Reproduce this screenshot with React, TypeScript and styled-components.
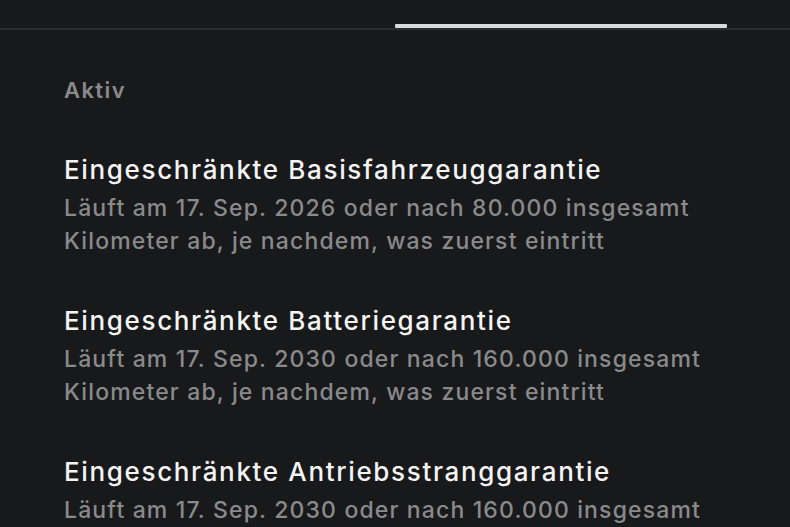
import styled, { createGlobalStyle } from "styled-components";

const GlobalStyle = createGlobalStyle`
  html, body {
    margin: 0;
    padding: 0;
    background: #18191b;
  }
  body {
    font-family: Inter, "Liberation Sans", sans-serif;
    -webkit-font-smoothing: antialiased;
  }
`;

const Page = styled.div`
  width: 790px;
  height: 527px;
  overflow: hidden;
  background: #18191b;
`;

const TabBar = styled.div`
  height: 28px;
  border-bottom: 2px solid #2c2d30;
  display: flex;
  align-items: flex-end;
  padding-left: 395px;
`;

const TabIndicator = styled.div`
  width: 332px;
  height: 4px;
  background: #d9d9d9;
  border-radius: 1px;
`;

const Content = styled.div`
  padding: 46px 64px 0;
  display: flex;
  flex-direction: column;
`;

const SectionLabel = styled.div`
  font-size: 22px;
  font-weight: 600;
  color: #8a8a8c;
  line-height: 28px;
  letter-spacing: 1.4px;
  margin-bottom: 48px;
`;

const List = styled.div`
  display: flex;
  flex-direction: column;
  gap: 45px;
`;

const Item = styled.div`
  display: flex;
  flex-direction: column;
`;

const Title = styled.div`
  font-size: 26px;
  font-weight: 500;
  color: #f4f4f4;
  line-height: 36px;
  letter-spacing: 1.65px;
  margin-bottom: 4px;
`;

const Detail = styled.div`
  font-size: 23px;
  font-weight: 500;
  color: #898a8c;
  line-height: 33px;
  letter-spacing: 1.15px;
  max-width: 680px;
`;

const warranties = [
  {
    title: "Eingeschränkte Basisfahrzeuggarantie",
    detail:
      "Läuft am 17. Sep. 2026 oder nach 80.000 insgesamt Kilometer ab, je nachdem, was zuerst eintritt",
  },
  {
    title: "Eingeschränkte Batteriegarantie",
    detail:
      "Läuft am 17. Sep. 2030 oder nach 160.000 insgesamt Kilometer ab, je nachdem, was zuerst eintritt",
  },
  {
    title: "Eingeschränkte Antriebsstranggarantie",
    detail:
      "Läuft am 17. Sep. 2030 oder nach 160.000 insgesamt Kilometer ab, je nachdem, was zuerst eintritt",
  },
];

export default function App() {
  return (
    <Page>
      <GlobalStyle />
      <TabBar>
        <TabIndicator />
      </TabBar>
      <Content>
        <SectionLabel>Aktiv</SectionLabel>
        <List>
          {warranties.map((w) => (
            <Item key={w.title}>
              <Title>{w.title}</Title>
              <Detail>{w.detail}</Detail>
            </Item>
          ))}
        </List>
      </Content>
    </Page>
  );
}
